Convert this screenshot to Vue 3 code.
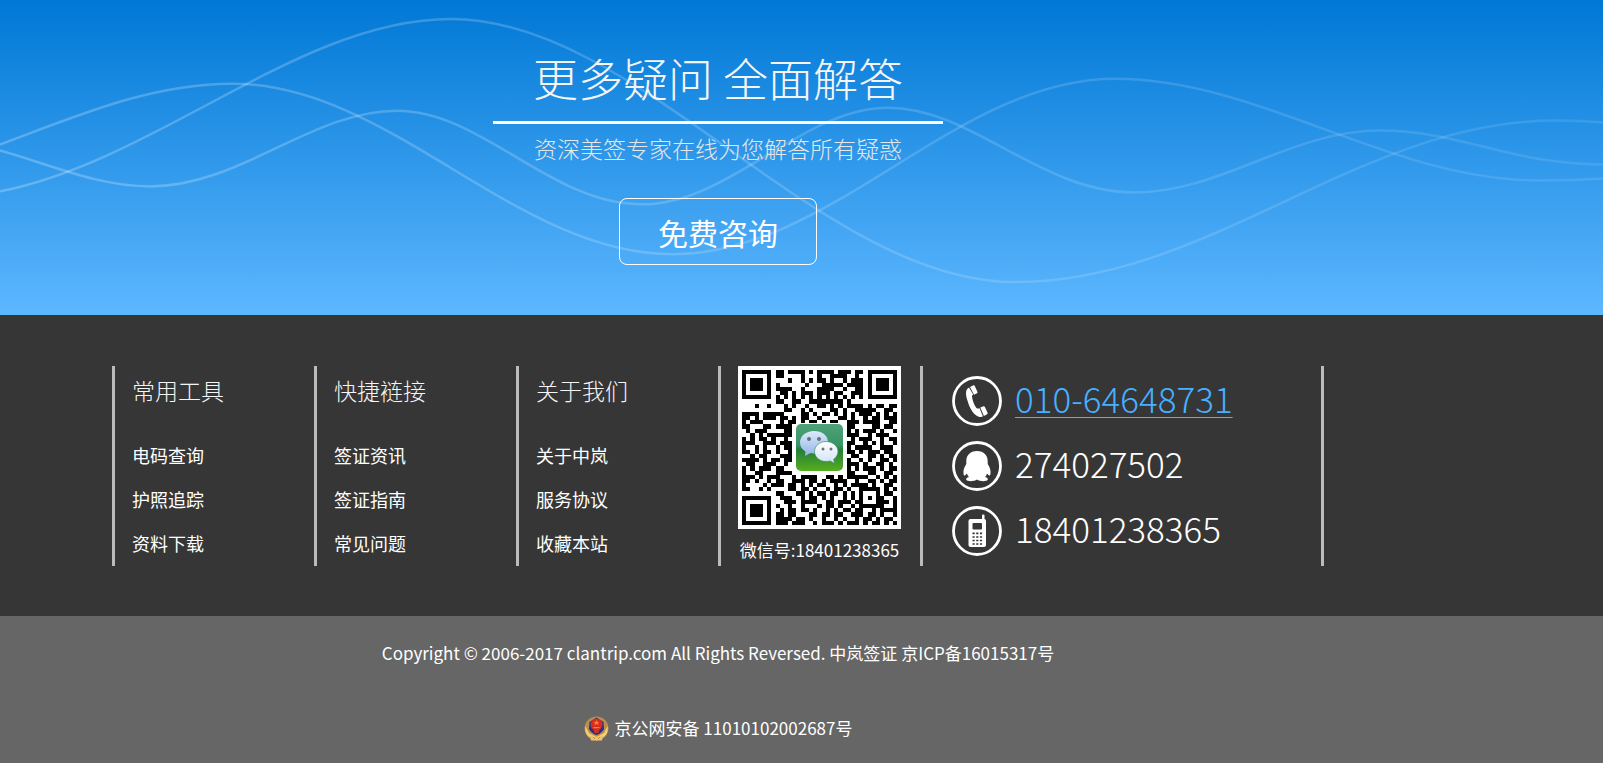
<script setup>
const columns = [
  { title: '常用工具', links: ['电码查询', '护照追踪', '资料下载'] },
  { title: '快捷裢接', links: ['签证资讯', '签证指南', '常见问题'] },
  { title: '关于我们', links: ['关于中岚', '服务协议', '收藏本站'] },
]

const qrRows = [
  '#######.##.####.#.####.###.##.#######',
  '#.....#.##....#...#..####..#..#.....#',
  '#.###.#....#..#.#.##.#..#.###.#.###.#',
  '#.###.#.#......#...#####.####.#.###.#',
  '#.###.#.####..#...####..#..##.#.###.#',
  '#.....#..##.#.###.###.##..###.#.....#',
  '#######.#.#.#.#.#.#.#.#.#.#.#.#######',
  '........##..##..########.#...........',
  '...#..#...#.#..#..##.#.#.####.#.##.##',
  '..........##..#.#....##.#..#####..##.',
  '####.#####....##.#.##.#.#.#.###.#.#.#',
  '##.#.###.##.#.##..#....##.#..#.##.###',
  '#.###....#.##.#.##.#.##..###.####..##',
  '##...##.####.............##....##.##.',
  '.#.###....##.............#.#.###.#..#',
  '..#.#.######.............###..#.###..',
  '#.#.##.#..#...............#.###..#.##',
  '###..###.###.............##..#.#.#..#',
  '#..#.#..#.##.............#.####..###.',
  '##.#.##.#..#.............##.#.###.##.',
  '..#.##...###..............##..##.#.##',
  '####.#.##.##.............#..#.#..##.#',
  '.##..###..#..............###.#..##.#.',
  '#.#.###.##...............#.#.###.#.##',
  '#..##...####.............##...##..##.',
  '###.#.###...#.####..##.#.#####..#.#.#',
  '##.#..#.##..###.##.#.####..#..##.#.##',
  '#....#.###.##.#.#.##..#.#.####.#..##.',
  '##..#.#....##.##.#..#.##.#..#####.#.#',
  '........##...##.#.##.##.#.#.#...#.##.',
  '#######..###..#.##.#.#..#.#.#.#.##..#',
  '#.....#...###.####..##.###.##...###.#',
  '#.###.#.#..#..#...#.##.#..#.######..#',
  '#.###.#..#.##.##.#..#.#.##.##..#.####',
  '#.###.#.##.##...##.##.##..###.##.#..#',
  '#.....#.####.##.#..#..#.#..#.##.#.##.',
  '#######.###.###..#.###.#.###.#.##.#.#',
]

const qrPath = qrRows
  .map((row, y) => [...row].map((c, x) => (c === '#' ? `M${x} ${y}h1v1h-1z` : '')).join(''))
  .join('')
</script>

<template>
  <div class="page">
    <section class="hero">
      <svg class="waves" viewBox="0 0 1603 316" preserveAspectRatio="none" aria-hidden="true">
        <defs>
          <linearGradient id="fade" gradientUnits="userSpaceOnUse" x1="0" y1="0" x2="1603" y2="0">
            <stop offset="0" stop-color="#fff" stop-opacity=".24" />
            <stop offset="1" stop-color="#fff" stop-opacity=".1" />
          </linearGradient>
        </defs>
        <g fill="none" stroke="url(#fade)" stroke-width="2.5">
          <path d="M0 145C75 117 150 84 232 84C391 84 514 255 673 255C832 255 956 79 1115 79C1260 79 1390 181 1539 181Q1575 181 1603 179" />
          <path d="M0 192C160 160 300 19 451 19C640 19 820 283 1015 283C1210 283 1360 121 1555 121Q1580 121 1603 123" />
          <path d="M0 151C50 165 98 187 150 187C240 187 312 111 397 111C482 111 550 205 642 205C730 205 802 108 888 108C972 108 1040 193 1134 193C1222 193 1290 131 1380 131C1460 131 1510 165 1603 165" />
        </g>
      </svg>
      <div class="inner hero-content">
        <h1>更多疑问 全面解答</h1>
        <p>资深美签专家在线为您解答所有疑惑</p>
        <button type="button">免费咨询</button>
      </div>
    </section>

    <footer>
      <div class="dark">
        <div class="inner columns">
          <nav v-for="col in columns" :key="col.title" class="column" :aria-label="col.title">
            <h2>{{ col.title }}</h2>
            <ul>
              <li v-for="link in col.links" :key="link"><a href="#">{{ link }}</a></li>
            </ul>
          </nav>

          <div class="column">
            <svg class="qr" viewBox="0 0 163 163" role="img" aria-label="微信二维码">
              <defs>
                <linearGradient id="tile" x1="0" y1="0" x2="0" y2="1">
                  <stop offset="0" stop-color="#4fa277" />
                  <stop offset=".45" stop-color="#379568" />
                  <stop offset=".55" stop-color="#237f37" />
                  <stop offset="1" stop-color="#58ad20" />
                </linearGradient>
                <linearGradient id="bubble" x1="0" y1="0" x2="0" y2="1">
                  <stop offset="0" stop-color="#dceafa" />
                  <stop offset="1" stop-color="#92b5e8" />
                </linearGradient>
                <linearGradient id="bubbleFront" x1="0" y1="0" x2="0" y2="1">
                  <stop offset="0" stop-color="#fff" />
                  <stop offset="1" stop-color="#cfe2f8" />
                </linearGradient>
              </defs>
              <rect width="163" height="163" fill="#fff" />
              <svg x="4" y="4" width="155" height="155" viewBox="0 0 37 37">
                <path :d="qrPath" fill="#000" shape-rendering="crispEdges" />
              </svg>
              <rect x="57" y="57" width="49" height="49" rx="6" fill="#fff" />
              <rect x="58" y="58" width="47" height="47" rx="5" fill="url(#tile)" />
              <path d="M76 65c-8 0-14 5-14 11.500c0 4 2 7 5.500 9l-.5 4.500l5.500-3c1 .3 2.300.4 3.500.4c8 0 14-5 14-11.500s-6-11-14-11z" fill="url(#bubble)" />
              <path d="M88 75.500c-6.500 0-11.500 4.500-11.500 10s5 10 11.500 10c1.500 0 3-.2 4.200-.6l4.300 2.600l-.8-4.300c2.600-1.800 4.300-4.600 4.300-7.700c0-5.500-5.400-10-12-10z" fill="url(#bubbleFront)" stroke="#3b8d50" stroke-width=".7" />
              <g fill="#6d7078">
                <circle cx="71" cy="73" r="2" /><circle cx="81" cy="73" r="2" />
                <circle cx="85" cy="83" r="1.500" /><circle cx="93" cy="83" r="1.500" />
              </g>
            </svg>
            <p class="wechat-id">微信号:18401238365</p>
          </div>

          <div class="column contacts">
            <div class="contact">
              <svg viewBox="0 0 50 50" aria-hidden="true">
                <circle cx="25" cy="25" r="23.500" fill="none" stroke="#fff" stroke-width="2.800" />
                <path d="M17 11.500C13 13.500 13.600 19 15.600 25C18 33 22 39.500 27.500 41C28.700 41.300 30 41 31 40.600L27.600 32.200C26 33 24.800 32.700 23.700 31C21.700 27.600 20.300 23.800 20 20.500C20 19.500 20.500 18.900 21.200 18.500Z" fill="#fff" />
                <path d="M18 10.900l3.500-1.600q.9-.3 1.300.6l2.700 6q.3 1-.5 1.400l-3 1.400zM28.300 31.600l3.200-1.300q.9-.3 1.400.6l2.700 5.900q.3.900-.5 1.400l-3.200 1.900z" fill="#fff" />
              </svg>
              <a class="phone" href="tel:010-64648731">010-64648731</a>
            </div>
            <div class="contact">
              <svg viewBox="0 0 50 50" aria-hidden="true">
                <circle cx="25" cy="25" r="23.500" fill="none" stroke="#fff" stroke-width="2.800" />
                <path d="M25 10C18 10 14.300 14.500 14.300 20L14.300 23C12.500 26 11 29 11.500 32.500C11.700 34.700 12.500 35 13.500 34L15 32.500C15.400 34 16 35 17 36C14.500 36.500 13.800 37.800 14.300 38.800C15.500 41 22.500 40.500 25 38.500C27.500 40.500 34.500 41 35.700 38.800C36.200 37.800 35.500 36.500 33 36C34 35 34.600 34 35 32.500L36.500 34C37.500 35 38.300 34.700 38.500 32.500C39 29 37.500 26 35.700 23L35.700 20C35.700 14.500 32 10 25 10Z" fill="#fff" />
              </svg>
              <span>274027502</span>
            </div>
            <div class="contact">
              <svg viewBox="0 0 50 50" aria-hidden="true">
                <circle cx="25" cy="25" r="23.500" fill="none" stroke="#fff" stroke-width="2.800" />
                <rect x="16.500" y="13" width="17.500" height="28" rx="2" fill="#fff" />
                <rect x="30" y="8.500" width="2.500" height="7" rx="1" fill="#fff" />
                <rect x="20.500" y="17" width="9.500" height="6.500" rx="1" fill="#363636" />
                <path d="M20.500 27.300h10M20.500 31h10M20.500 34.500h10M20.500 38h10" stroke="#363636" stroke-width="1.700" stroke-dasharray="2.200 1.500" />
              </svg>
              <span>18401238365</span>
            </div>
          </div>
        </div>
      </div>

      <div class="legal">
        <div class="inner">
          <p>Copyright © 2006-2017 clantrip.com All Rights Reversed. 中岚签证 京ICP备16015317号</p>
          <a class="record" href="#">
            <svg viewBox="0 0 25 25" aria-hidden="true">
              <circle cx="12.500" cy="12.500" r="12" fill="#b98d50" />
              <path d="M1.500 10C0 18 5 22 10 22.500L15 22.500C20 22 25 18 23.500 10L20 17L12.500 21L5 17Z" fill="#f3cf75" />
              <path d="M5.500 6L12.500 1.500L19.500 6L20 13Q18 17 12.500 19Q7 17 5 13Z" fill="#25347f" />
              <circle cx="12.500" cy="8.500" r="6" fill="#dc2b1e" />
              <path d="M9.500 14h6l-1 3h-4z" fill="#d3301f" />
              <path d="M12.500 4l1 2h2l-1.600 1.300l.6 2l-2-1.200l-2 1.200l.6-2L9.500 6h2zM9.500 11h6v1.300h-6z" fill="#ee8140" />
              <path d="M6 19.500Q12.500 22 19 19.500L18 24.500H7Z" fill="#edc46c" />
              <path d="M4 13l4 5M21 13l-4 5M9 21l2 2M16 21l-2 2" stroke="#c48a40" />
            </svg>
            <span>京公网安备 11010102002687号</span>
          </a>
        </div>
      </div>
    </footer>
  </div>
</template>

<style>
body {
  margin: 0;
  background: #666;
}
</style>

<style scoped>
.page {
  color: #fff;
  font-family: "Noto Sans CJK SC", sans-serif;
  font-size: 18px;
}

h1, h2, p, ul {
  margin: 0;
  padding: 0;
}

h1, h2, .hero-content p {
  font-weight: 300;
}

a {
  color: inherit;
  text-decoration: none;
}

.inner {
  width: 100%;
  max-width: 1436px;
  box-sizing: border-box;
}

.hero {
  position: relative;
  background: linear-gradient(#0078d5, #5db7ff);
}

.waves {
  position: absolute;
  inset: 0;
  width: 100%;
  height: 100%;
}

.hero-content {
  position: relative;
  display: flex;
  flex-direction: column;
  align-items: center;
  padding: 38px 0 50px;
}

h1 {
  width: 450px;
  padding-bottom: 3px;
  border-bottom: 3px solid #fff;
  color: #f5f5f5;
  font-size: 45px;
  line-height: 80px;
  text-align: center;
}

.hero-content p {
  margin: 4px 0 30px;
  color: #e6e6e6;
  font-size: 23px;
  line-height: 40px;
}

button {
  width: 198px;
  height: 67px;
  padding: 0;
  border: 1px solid #fff;
  border-radius: 8px;
  background: transparent;
  color: #fff;
  font-family: inherit;
  font-size: 30px;
}

.dark {
  background: #363636;
}

.columns {
  display: grid;
  grid-template-columns: repeat(4, 1fr) 2fr;
  padding: 51px 112px 50px;
}

.column {
  min-height: 200px;
  box-sizing: border-box;
  padding-left: 17px;
  border-left: 3px solid #bbb;
}

h2 {
  padding-top: 4px;
  font-size: 23px;
  line-height: 40px;
  color: #f5f5f5;
}

ul {
  margin-top: 23px;
  list-style: none;
}

li {
  line-height: 44px;
}

.qr {
  display: block;
  width: 163px;
  height: 163px;
}

.wechat-id {
  width: 163px;
  margin-top: 9px;
  font-size: 17px;
  line-height: 24px;
  text-align: center;
  white-space: nowrap;
}

.contacts {
  display: flex;
  flex-direction: column;
  gap: 15px;
  padding: 10px 0 0 29px;
  border-right: 3px solid #bbb;
}

.contact {
  display: flex;
  gap: 13px;
  height: 50px;
  font-size: 35px;
  font-weight: 300;
  line-height: 44px;
}

.contact svg {
  width: 50px;
  height: 50px;
}

.phone {
  color: #47b0ff;
  text-decoration: underline;
  text-decoration-thickness: 1px;
  text-underline-offset: 4px;
}

.legal {
  padding: 18px 0 16px;
  background: #666;
  font-size: 17px;
}

.legal .inner {
  display: flex;
  flex-direction: column;
  align-items: center;
  gap: 37px;
  line-height: 38px;
}

.record {
  display: flex;
  align-items: center;
  gap: 6px;
}

.record svg {
  width: 25px;
  height: 25px;
}
</style>
